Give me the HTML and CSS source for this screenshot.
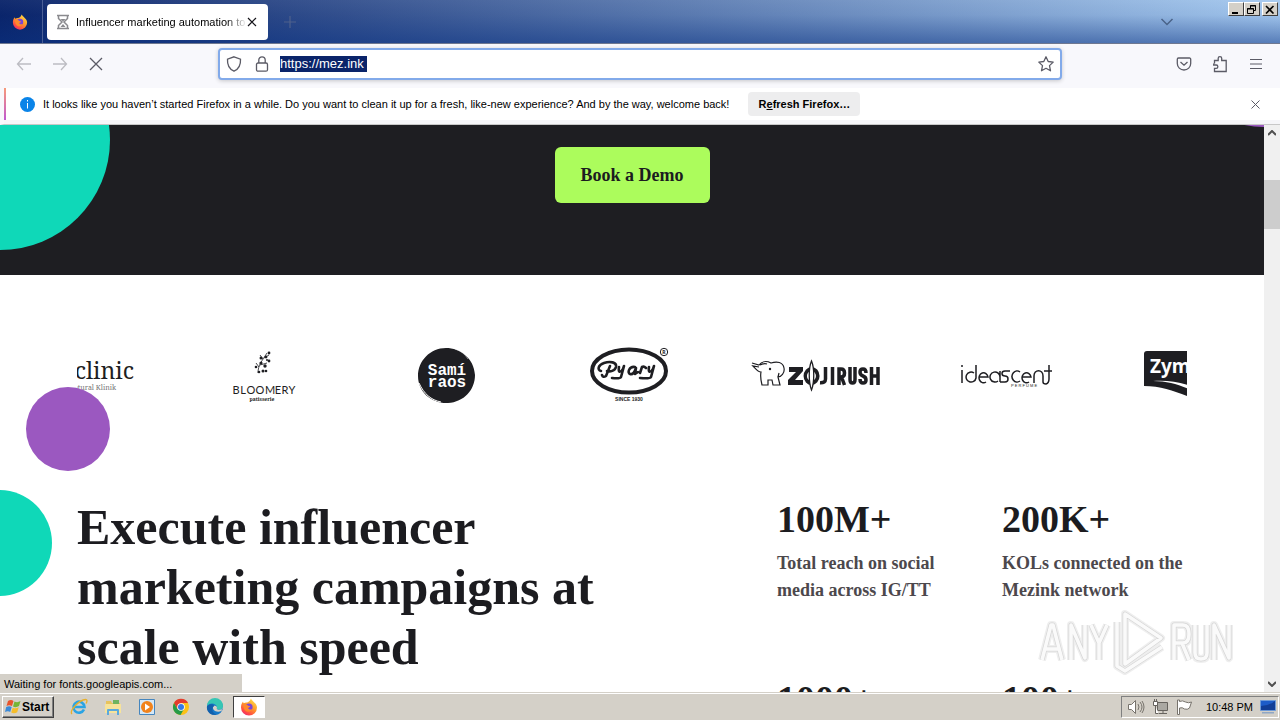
FILE: index.html
```html
<!DOCTYPE html>
<html lang="en">
<head>
<meta charset="utf-8">
<title>Influencer marketing automation tool</title>
<link rel="stylesheet" href="styles.css">
</head>
<body>
<svg width="0" height="0" class="defs" aria-hidden="true">
  <defs>
    <linearGradient id="ffOuter" x1=".8" y1="0" x2=".2" y2="1"><stop offset="0" stop-color="#ffe14a"/><stop offset=".45" stop-color="#ff9a2a"/><stop offset=".8" stop-color="#ff4a45"/><stop offset="1" stop-color="#e8257a"/></linearGradient>
    <symbol id="firefox" viewBox="0 0 18 18">
      <path d="M11 .5c.6 1.800 2 2.400 3.300 3.900 1.600 1.400 2.700 3 2.700 5.200a8 8 0 0 1-16 0C1 7.300 1.600 5.500 3 3.600c.1.800.3 1.200.8 1.700.8-.7 1.700-1 2.900-.9C8 4.500 9.400 3.800 11 .5z" fill="url(#ffOuter)"/>
      <circle cx="9" cy="9" r="3.600" fill="#7a45d8"/>
      <path d="M3.500 6.800c2-.8 3.500-.3 4.700 1 .8.300 1.700.4 2.100.8-.6.900-1.700.9-2.200 1.500.4 1.500 2.500 2 4.100.9-1 2.900-4.600 3.600-6.700 1.800C3.800 11.200 3.200 9 3.500 6.800z" fill="#ff8a2c"/>
    </symbol>
    <path id="anyrun" d="M4 52l9-35h2l9 35M8 41h12M33 52V17l14 33V17M53 17l8 18v17M69 17l-8 18M136 52V17h9q6 0 6 9t-6 9h-9M144 35l7 17M157 17v28q0 6 6 6t6-6V17M176 52V17l15 33V17M87 6l36 24-36 26zM79 14v44l8 5 37-24"/>
  </defs>
</svg>

<header class="titlebar">
  <div class="app-icon"><svg width="16" height="16"><use href="#firefox"/></svg></div>
  <div class="tab">
    <svg class="hourglass" width="14" height="16" viewBox="0 0 14 16" fill="none" stroke="#8a8a8e" stroke-width="1.500"><path d="M1 1.500h12M1 14.500h12M2.500 2v2.500L6 8l-3.500 3.500V14M11.500 2v2.500L8 8l3.500 3.500V14"/><path d="M4.500 5h5L7 7.500zM4.500 13L7 10l2.500 3z" fill="#8a8a8e" stroke="none"/></svg>
    <span class="tab-title">Influencer marketing automation to</span>
    <button class="bare" aria-label="Close tab"><svg width="10" height="10" viewBox="0 0 10 10" stroke="#15141a" stroke-width="1.200"><path d="M1 1l8 8M9 1l-8 8"/></svg></button>
  </div>
  <button class="bare new-tab" aria-label="New tab"><svg width="12" height="12" viewBox="0 0 12 12" stroke="#4f618c" stroke-width="1.200"><path d="M6 0v12M0 6h12"/></svg></button>
  <button class="bare tab-list" aria-label="List all tabs"><svg width="14" height="8" viewBox="0 0 14 8" fill="none" stroke="#4a6388" stroke-width="1.500"><path d="M1.500 1L7 6.500 12.500 1"/></svg></button>
  <div class="window-buttons">
    <button aria-label="Minimize"><svg width="10" height="9" viewBox="0 0 10 9"><path d="M1 7h6v2H1z"/></svg></button>
    <button aria-label="Restore"><svg width="10" height="9" viewBox="0 0 10 9" fill="none" stroke="#000"><path d="M3.500 3V.5h5v5H7M3 1h6M.5 3.500h6v5h-6zM0 4h7"/></svg></button>
    <button class="close" aria-label="Close"><svg width="10" height="9" viewBox="0 0 10 9" stroke="#000" stroke-width="1.600"><path d="M1 1l7.500 7.500M8.500 1L1 8.500"/></svg></button>
  </div>
</header>

<nav class="toolbar">
  <div class="nav-buttons">
    <button class="bare" aria-label="Back"><svg width="16" height="14" viewBox="0 0 16 14" fill="none" stroke="#bcbcc2" stroke-width="1.300"><path d="M15 7H1.500M7 1L1.500 7 7 13"/></svg></button>
    <button class="bare" aria-label="Forward"><svg width="16" height="14" viewBox="0 0 16 14" fill="none" stroke="#bcbcc2" stroke-width="1.300"><path d="M1 7h13.500M9 1l5.500 6L9 13"/></svg></button>
    <button class="bare" aria-label="Stop"><svg width="16" height="14" viewBox="0 0 16 14" stroke="#5b5b66" stroke-width="1.300"><path d="M2 1l12 12M14 1L2 13"/></svg></button>
  </div>
  <div class="urlbar">
    <svg width="16" height="16" viewBox="0 0 16 16" fill="none" stroke="#5b5b66" stroke-width="1.300"><path d="M8 .8l6.500 2.400c.3 4.800-1.300 9.600-6.500 12C2.800 12.800 1.200 8 1.500 3.200z"/></svg>
    <svg width="16" height="16" viewBox="0 0 16 16" fill="none" stroke="#5b5b66" stroke-width="1.300"><rect x="2.500" y="7" width="11" height="8.200" rx="1.500"/><path d="M4.800 7V4a3.200 3.200 0 0 1 6.400 0v3"/></svg>
    <input class="url" type="text" value="https://mez.ink" aria-label="Address">
    <button class="bare bookmark" aria-label="Bookmark"><svg width="16" height="16" viewBox="0 0 16 16" fill="none" stroke="#5b5b66" stroke-width="1.300" stroke-linejoin="round"><path d="M8 .8l2.200 4.700 5 .6-3.700 3.500 1 5.200L8 12.300l-4.500 2.500 1-5.200L.8 6.100l5-.6z"/></svg></button>
  </div>
  <div class="tools">
    <button class="bare" aria-label="Pocket"><svg width="16" height="14" viewBox="0 0 16 14" fill="none" stroke="#5b5b66" stroke-width="1.300"><path d="M2.500 1h11a1.200 1.200 0 0 1 1.200 1.200V6.500a6.700 6.500 0 0 1-13.400 0V2.200A1.200 1.200 0 0 1 2.500 1zM4.500 5L8 8.200 11.500 5"/></svg></button>
    <button class="bare" aria-label="Extensions"><svg width="16" height="18" viewBox="0 0 16 18" fill="none" stroke="#5b5b66" stroke-width="1.300"><path d="M2.500 8.500V5.500h3.700V3.300a1.700 1.700 0 0 1 3.500 0v2.200h4.500v11H2.500v-3.200h1.700a1.600 1.600 0 0 0 0-3.300H1.700V8.500"/></svg></button>
    <button class="bare" aria-label="Menu"><svg width="16" height="12" viewBox="0 0 16 12" stroke="#5b5b66" stroke-width="1.200"><path d="M2 1.500h12M2 6h12M2 10.500h12"/></svg></button>
  </div>
</nav>

<div class="notice">
  <svg class="info" width="15" height="15" viewBox="0 0 15 15"><circle cx="7.500" cy="7.500" r="7.500" fill="#0a84e8"/><path d="M7 3h1v1.500H7zM7 6h1v5.500H7z" fill="#fff"/></svg>
  <span class="notice-text">It looks like you haven’t started Firefox in a while. Do you want to clean it up for a fresh, like-new experience? And by the way, welcome back!</span>
  <button class="refresh">R<u>e</u>fresh Firefox…</button>
  <button class="bare dismiss" aria-label="Dismiss"><svg width="9" height="9" viewBox="0 0 9 9" stroke="#5b5b66"><path d="M.5.5l8 8M8.500.5l-8 8"/></svg></button>
</div>

<div class="viewport">
  <main class="page">
    <section class="hero">
      <span class="dot dot-hero"></span><span class="dot dot-corner"></span>
      <button class="demo">Book a Demo</button>
    </section>
    <section class="brands">
      <div class="brand-window"><div class="brand-track">
        <svg viewBox="0 0 185 80"><text x="150" y="44" class="serif" font-size="23" text-anchor="end">clinic</text><text x="132" y="55" class="serif" font-size="7" text-anchor="end" fill="#777">atural Klinik</text></svg>
        <svg viewBox="0 0 185 80">
          <g fill="none" stroke="#1e1e22" stroke-width=".8"><path d="M89 38c0-8 4-12 9-20M90 32l-3-4M91 30l7-2M94 24l-3-4M95 23l5-3"/></g>
          <g><circle cx="100" cy="18" r="1.400"/><circle cx="92" cy="23" r="1.500"/><circle cx="97" cy="22" r="1.400"/><circle cx="100" cy="26" r="1.400"/><circle cx="87" cy="32" r="1.300"/><circle cx="92" cy="28" r="1.600"/><circle cx="96" cy="31" r="1.700"/><circle cx="94" cy="36" r="1.500"/><circle cx="90" cy="37" r="1.300"/><circle cx="97" cy="36" r="1.300"/><circle cx="98" cy="25" r="1"/></g>
          <g class="thin" font-size="11" text-anchor="middle"><text x="67" y="59">B</text><text x="74" y="59">L</text><text x="82" y="59">O</text><text x="91" y="59">O</text><text x="101" y="59">M</text><text x="109" y="59">E</text><text x="116" y="59">R</text><text x="123" y="59">Y</text></g>
          <text x="93" y="66" class="serif" font-size="5" font-weight="700" text-anchor="middle">patisserie</text>
        </svg>
        <svg viewBox="0 0 185 80">
          <path d="M92 13c14 0 28 10 29 27 0 15-11 27-27 28-15 1-30-10-30-27 0-15 12-28 28-28z"/>
          <path d="M65 48c5 11 12 17 22 19" fill="none" stroke="#fff" stroke-width="1"/><path d="M101 14c6 2 10 5 13 10" fill="none" stroke="#fff" stroke-width=".5"/>
          <g fill="#fff" class="slab" text-anchor="middle" font-size="16"><text x="93" y="40">Samí</text><text x="93" y="52">raos</text></g>
        </svg>
        <svg viewBox="0 0 185 80">
          <ellipse cx="90" cy="36" rx="37" ry="21.500" fill="none" stroke="#1e1e22" stroke-width="4"/>
          <g fill="none" stroke="#1e1e22" stroke-width="2.600" stroke-linecap="round" stroke-linejoin="round"><path d="M71 31l-4 10q-3 2-4-1M62 36c-4-1-3-6 3-8 6-2 13-1 12 4-1 4-6 5-9 4M80 32c-1 6 1 6 4 2l1-3-3 11q-1 2-9 1M96 32c-6-1-8 6-5 7s5-3 6-6l-1 6 3-2M101 38l2-6q2-1 4 1M110 32c-1 6 1 6 4 2l1-3-3 11q-1 2-11 1"/></g>
          <circle cx="125" cy="17" r="3.700" fill="none" stroke="#1e1e22"/><text x="125" y="19" text-anchor="middle" font-size="5" font-weight="700">R</text>
          <text x="90" y="66" text-anchor="middle" font-size="5" class="sans" font-weight="700">SINCE 1930</text>
        </svg>
        <svg viewBox="0 0 185 80">
          <path d="M28 28l7 2c3-4 8-4 12-2 6-2 12-1 13 5 1 5-3 9-6 9l2 8h-7l-1-5h-4v5h-6c-1-4-2-8-1-13-3 0-6-4-8-6l6 1M36 30c2-1 5-2 7-1M54 42l1-4" fill="none" stroke="#1e1e22" stroke-width="1.200"/><circle cx="46" cy="34" r="1.200"/>
          <path d="M65 32h14v4l-8 9h8v5H64v-5l8-8h-7z"/>
          <path fill-rule="evenodd" d="M87.500 32a8 9 0 1 0 .1 18 8 9 0 0 0-.1-18zm0 4a4.500 5 0 1 1-.1 10 4.500 5 0 0 1 .1-10z"/><path d="M87.500 26c3 7 3 21 0 29-3-8-3-22 0-29z" fill="#fff" stroke="#1e1e22" stroke-width="1.300"/>
          <path d="M101.500 32v12q0 4-5.500 3.700M108.500 32v18M115 50V34h2q3.500 0 3.500 4t-3.500 4h-2M117.500 42l3 8M126 32v12.500q0 3.500 2.500 3.500t2.500-3.500V32M142 38q0-4-3-4t-3 3 3 4 3 4-3 3-3-4M147.500 32v18M154 32v18M147 41h6" fill="none" stroke="#1e1e22" stroke-width="3.500"/>
        </svg>
        <svg viewBox="0 0 185 80">
          <g fill="none" stroke="#1e1e22" stroke-width="1.500"><path d="M53 35v13M53 30v2"/><path d="M67 30v13a5 5 0 1 1-2-5M70 42h9a4.500 5 0 1 0-2 5M91 36v11M91 42a5 5 0 1 0-2 4M101 36h-5c-4 0-4 5 0 5s4 6 0 6h-5M111 37a5 5.500 0 1 0 0 9M113 42h9a4.500 5 0 1 0-2 5M125 48v-7c0-7 9-7 9 0v6q0 2 3 2 3-1 3-5V30M135 36h8"/></g>
          <text x="102" y="52" font-size="4" class="sans">P E R F U M E</text>
        </svg>
        <svg viewBox="0 0 185 80"><path d="M53 16h50v49C85 58 70 51 50 51V19q0-3 3-3z"/><path d="M59 46c17 0 29 5 43 11v-4C88 47 74 45 59 46z" fill="#fff"/><text x="56" y="38" fill="#fff" font-weight="700" font-size="19">Zym</text></svg>
      </div></div>
    </section>
    <section class="pitch">
      <span class="dot dot-purple"></span><span class="dot dot-left"></span>
      <h1>Execute influencer<br>marketing campaigns at<br>scale with speed</h1>
      <dl class="stats">
        <div><dt>100M+</dt><dd>Total reach on social<br>media across IG/TT</dd></div>
        <div><dt>200K+</dt><dd>KOLs connected on the<br>Mezink network</dd></div>
        <div><dt>1000+</dt></div>
        <div><dt>100+</dt></div>
      </dl>
    </section>
  </main>
  <div class="scrollbar">
    <svg width="8" height="6" viewBox="0 0 8 6" fill="none" stroke="#505050" stroke-width="2"><path d="M0 5l4-4 4 4"/></svg>
    <span class="thumb"></span>
    <svg width="8" height="6" viewBox="0 0 8 6" fill="none" stroke="#505050" stroke-width="2"><path d="M0 1l4 4 4-4"/></svg>
  </div>
  <div class="status">Waiting for fonts.googleapis.com...</div>
  <svg class="watermark" width="200" height="68" viewBox="0 0 200 68" fill="none" stroke-linejoin="round">
    <use href="#anyrun" stroke="#ececec" stroke-width="8"/>
    <use href="#anyrun" stroke="#d0d0d0" stroke-width="5"/>
    <use href="#anyrun" stroke="#fafafa" stroke-width="3.500"/>
  </svg>
</div>

<footer class="taskbar">
  <button class="start"><svg width="16" height="16" viewBox="0 0 16 16"><path d="M3 2q3-2 5.500 0L7 7Q4 5.500 1.500 7z" fill="#e8542c"/><path d="M9.500 2.500q3 1.500 6-.5L14 7q-3 2-6 .5z" fill="#76b535"/><path d="M1.200 8q3-1.500 5.500 0l-1.500 5Q3 11.500 0 13z" fill="#3a8ad8"/><path d="M7.700 8.700q3 1.500 6-.5l-1.500 5q-3 2-6 .3z" fill="#f5bd2a"/></svg>Start</button>
  <div class="launchers">
    <button class="bare" aria-label="Internet Explorer"><svg width="18" height="18" viewBox="0 0 18 18" fill="none"><path d="M14 11.500A5.500 5.500 0 1 1 14.500 9H5" stroke="#2aa4e4" stroke-width="2.600"/><path d="M2 16C-1 13 9 2 15.500 1.500c2.200 0 1.500 2.500.5 4" stroke="#e8b02a" stroke-width="1.300"/></svg></button>
    <button class="bare" aria-label="Explorer"><svg width="18" height="18" viewBox="0 0 18 18"><path d="M2 3h5l1 2h8v10H2z" fill="#e7c35c"/><path d="M9 2h6v5H9z" fill="#6fb35e"/><path d="M1 6h16v9H1z" fill="#f7e39a"/><path d="M3 17v-5q0-1 1-1h10q1 0 1 1v5h-2v-4H5v4z" fill="#5ba9dc"/></svg></button>
    <button class="bare" aria-label="Media player"><svg width="18" height="18" viewBox="0 0 18 18"><path d="M1.500 1.500h15v15h-15z" fill="#d5e8f7" stroke="#4686be"/><circle cx="9" cy="9" r="6" fill="#f1831c"/><path d="M7 5.500l5 3.500-5 3.500z" fill="#fff"/></svg></button>
    <button class="bare" aria-label="Chrome"><svg width="18" height="18" viewBox="0 0 18 18"><circle cx="9" cy="9" r="8" fill="#fbc116"/><path d="M2 5a8 8 0 0 1 14 0H9L5.500 11z" fill="#e33b2e"/><path d="M2 5a8 8 0 0 0 6.500 12l3.500-6H5.500z" fill="#269b48"/><circle cx="9" cy="9" r="3.800" fill="#fff"/><circle cx="9" cy="9" r="3" fill="#3479e6"/></svg></button>
    <button class="bare" aria-label="Edge"><svg width="18" height="18" viewBox="0 0 18 18"><circle cx="9" cy="9" r="8" fill="#1578c8"/><path d="M1 8a8 8 0 0 1 16 0c0 3-2 4-5 3.500-2-.5-1-1.500-1-2.500C10 5 4 4 1 8z" fill="#36c6b4"/><path d="M7 8c-1 4 3 7 8.500 5L17 9q1 3-5 2.700c-2-.7-1-1.700-1-2.700-1-1.500-3-1.500-4-1z" fill="#d4d0c8"/><path d="M1 8c5-4 9 0 6 1-2 4 1 7 4 7.500C5 18 0 14 1 8z" fill="#1260ac"/></svg></button>
    <button class="bare running" aria-label="Firefox"><svg width="18" height="18"><use href="#firefox"/></svg></button>
  </div>
  <div class="tray">
    <svg width="18" height="16" viewBox="0 0 18 16" fill="#fff" stroke="#77736c"><path d="M1.500 5.500h3l4-4v13l-4-4h-3z"/><path d="M11 5q2 3 0 6M13 3q4 5 0 10M15 2q4 6 0 12" fill="none"/></svg>
    <svg width="17" height="16" viewBox="0 0 17 16" fill="#fff" stroke="#66635e"><path d="M5.500 3.500h10v8h-10z" fill="#aaa8a2"/><path d="M7 14.500h8M11 12v2M1.500 2.500h4v4h-4zM2.500 0v2M4.500 0v2M3.500 7v7.500h3"/></svg>
    <svg width="17" height="16" viewBox="0 0 17 16" fill="#fff" stroke="#77736c"><path d="M1.500 1v14.500h2V9q3-1 5 1 3 1 5-1l2-6q-3 1.500-6 0-3-2-6-.5V1z"/></svg>
    <time>10:48 PM</time>
    <svg width="16" height="14" viewBox="0 0 16 14"><path d="M.5.500h15v10H.5z" fill="#1d5cc8" stroke="#6f9ad6"/><path d="M1 6q8 0 14-5v9H1z" fill="#123e96"/><path d="M2 12h12v1.500H2z" fill="#8fa6c4"/></svg>
  </div>
</footer>
</body>
</html>
```
FILE: styles.css
```css
* { box-sizing: border-box; }
body { margin: 0; height: 100vh; display: flex; flex-direction: column; overflow: hidden; background: #fff; color: #000; font: 11px/16px "Liberation Sans", Arial, sans-serif; }
button { font: inherit; color: inherit; }
svg { display: block; flex: none; }
.defs { position: absolute; }
.bare { border: 0; padding: 0; background: none; display: flex; align-items: center; justify-content: center; }

.titlebar { flex: none; height: 44px; display: flex; align-items: center; border-bottom: 1px solid #6f7890; background: linear-gradient(to bottom, rgba(255,255,255,.04), rgba(10,50,130,.05) 35%, rgba(10,50,130,.5)), linear-gradient(to right, #0a246a, #a6caf0); }
.app-icon { width: 43px; align-self: stretch; display: flex; align-items: center; justify-content: center; border-right: 1px solid #4a5f96; padding-right: 3px; }
.tab { width: 221px; height: 36px; margin-left: 4px; padding: 0 11px 0 9px; display: flex; align-items: center; background: #fff; border-radius: 4px; }
.tab-title { flex: 1; margin: 0 0 0 6px; overflow: hidden; white-space: nowrap; mask-image: linear-gradient(to right, #000 88%, transparent); }
.new-tab { margin-left: 16px; }
.tab-list { margin-left: auto; margin-right: 54px; }
.window-buttons { display: flex; align-self: flex-start; padding: 2px 2px 0 0; }
.window-buttons button { width: 16px; height: 14px; padding: 0; display: flex; align-items: center; justify-content: center; background: #d4d0c8; border: 1px solid; border-color: #fff #404040 #404040 #fff; }
.window-buttons .close { margin-left: 2px; }

.toolbar { flex: none; height: 44px; display: flex; align-items: center; justify-content: space-between; padding: 0 16px 4px 16px; background: #f8f8fc; }
.nav-buttons { display: flex; gap: 20px; width: 202px; }
.urlbar { flex: 1; height: 32px; padding: 0 6px; display: flex; align-items: center; gap: 12px; background: #fff; border: 2px solid #82aaea; border-radius: 4px; box-shadow: 0 1px 4px rgba(0,0,0,.2); }
.url { width: 87px; height: 16px; margin-left: -2px; padding: 0; border: 0; background: #0a246a; color: #fff; font: 13px/16px "Liberation Sans", Arial, sans-serif; }
.bookmark { margin-left: auto; }
.tools { display: flex; align-items: center; justify-content: flex-end; gap: 20px; width: 202px; }

.notice { flex: none; height: 37px; display: flex; align-items: center; padding: 0 20px 4px 16px; border-bottom: 1px solid #c8c8c8; background: #fff; border-left: 4px solid #f8f8fc; background-image: linear-gradient(#f79a7a, #c058d0), linear-gradient(#f6f6f9, #f6f6f9); background-size: 2px 32px, 100% 4px; background-position: 0 0, 0 100%; background-repeat: no-repeat; }
.notice-text { margin-left: 8px; white-space: nowrap; }
.refresh { margin-left: 19px; width: 112px; height: 24px; padding: 0; border: 0; border-radius: 4px; background: #ededee; font-weight: 700; }
.dismiss { margin-left: auto; }

.viewport { flex: 1; min-height: 0; display: flex; position: relative; overflow: hidden; background: #fff; }
.page { flex: 1; min-width: 0; overflow: hidden; font-family: "Liberation Serif", serif; font-weight: 700; color: #1c1c20; }
.dot { position: absolute; border-radius: 50%; }
.hero { position: relative; overflow: hidden; display: flex; justify-content: center; height: 150px; padding: 22px 0 0; background: #1e1e22; }
.demo { width: 155px; height: 56px; border: 0; border-radius: 6px; background: #acfc5c; font-size: 18px; }
.dot-hero { width: 220px; height: 220px; left: -110px; top: -95px; background: #0fd8b8; }
.dot-corner { width: 200px; height: 200px; right: -100px; top: -198px; background: #9b58c0; }
.brands { padding: 60px 77px 0; }
.brand-window { overflow: hidden; }
.brand-track { display: flex; margin-left: -93px; }
.brand-track svg { width: 185px; height: 80px; fill: #1e1e22; font-family: "Noto Sans", sans-serif; font-weight: 400; }
.serif { font-family: "Noto Serif", "DejaVu Serif", "Liberation Serif", serif; }
.sans { font-family: "Liberation Sans", sans-serif; }
.thin { font-family: Lato, sans-serif; }
.slab { font-family: "Liberation Mono", monospace; font-weight: 700; }
.pitch { position: relative; display: flex; justify-content: space-between; padding: 81px 77px 0; }
.pitch h1 { margin: 0; padding-top: 1px; font-size: 50px; line-height: 60px; }
.dot-purple { width: 84px; height: 84px; left: 26px; top: -28px; background: #9b58c0; }
.dot-left { width: 106px; height: 106px; left: -54px; top: 75px; background: #0fd8b8; }
.stats { margin: 0; display: grid; grid-template-columns: 186px 185px; gap: 72px 39px; white-space: nowrap; }
.stats dt { font-size: 38px; line-height: 46px; margin-bottom: 8px; }
.stats dd { margin: 0; font-size: 18px; line-height: 27px; color: #4c484c; }
.scrollbar { width: 16px; display: flex; flex-direction: column; align-items: center; padding: 5px 0; background: #f0f0f0; }
.thumb { width: 16px; height: 49px; margin: 44px 0 auto; background: #cdcdcd; }
.status { position: absolute; left: 0; bottom: 0; width: 242px; height: 18px; padding: 2px 4px; background: #d4d0c8; }
.watermark { position: absolute; right: 42px; bottom: 16px; opacity: .85; }

.taskbar { flex: none; height: 28px; display: flex; align-items: center; padding: 1px 1px 0 2px; background: #d4d0c8; border-top: 1px solid #d4d0c8; box-shadow: inset 0 1px #fff; }
.start { width: 52px; height: 22px; padding: 0 2px; display: flex; align-items: center; gap: 1px; background: #d4d0c8; border: 1px solid; border-color: #fff #404040 #404040 #fff; box-shadow: inset -1px -1px #808080; font-weight: 700; font-size: 12px; }
.launchers { display: flex; align-items: center; margin-left: 8px; }
.launchers button { width: 34px; height: 22px; }
.launchers .running { width: 32px; margin-left: 1px; border: 1px solid; border-color: #404040 #fff #fff #404040; background: #fff; }
.tray { margin-left: auto; height: 22px; display: flex; align-items: center; gap: 7px; padding: 0 2px 0 5px; border: 1px solid; border-color: #808080 #fff #fff #808080; }
.tray time { margin-left: 6px; white-space: nowrap; }
```
